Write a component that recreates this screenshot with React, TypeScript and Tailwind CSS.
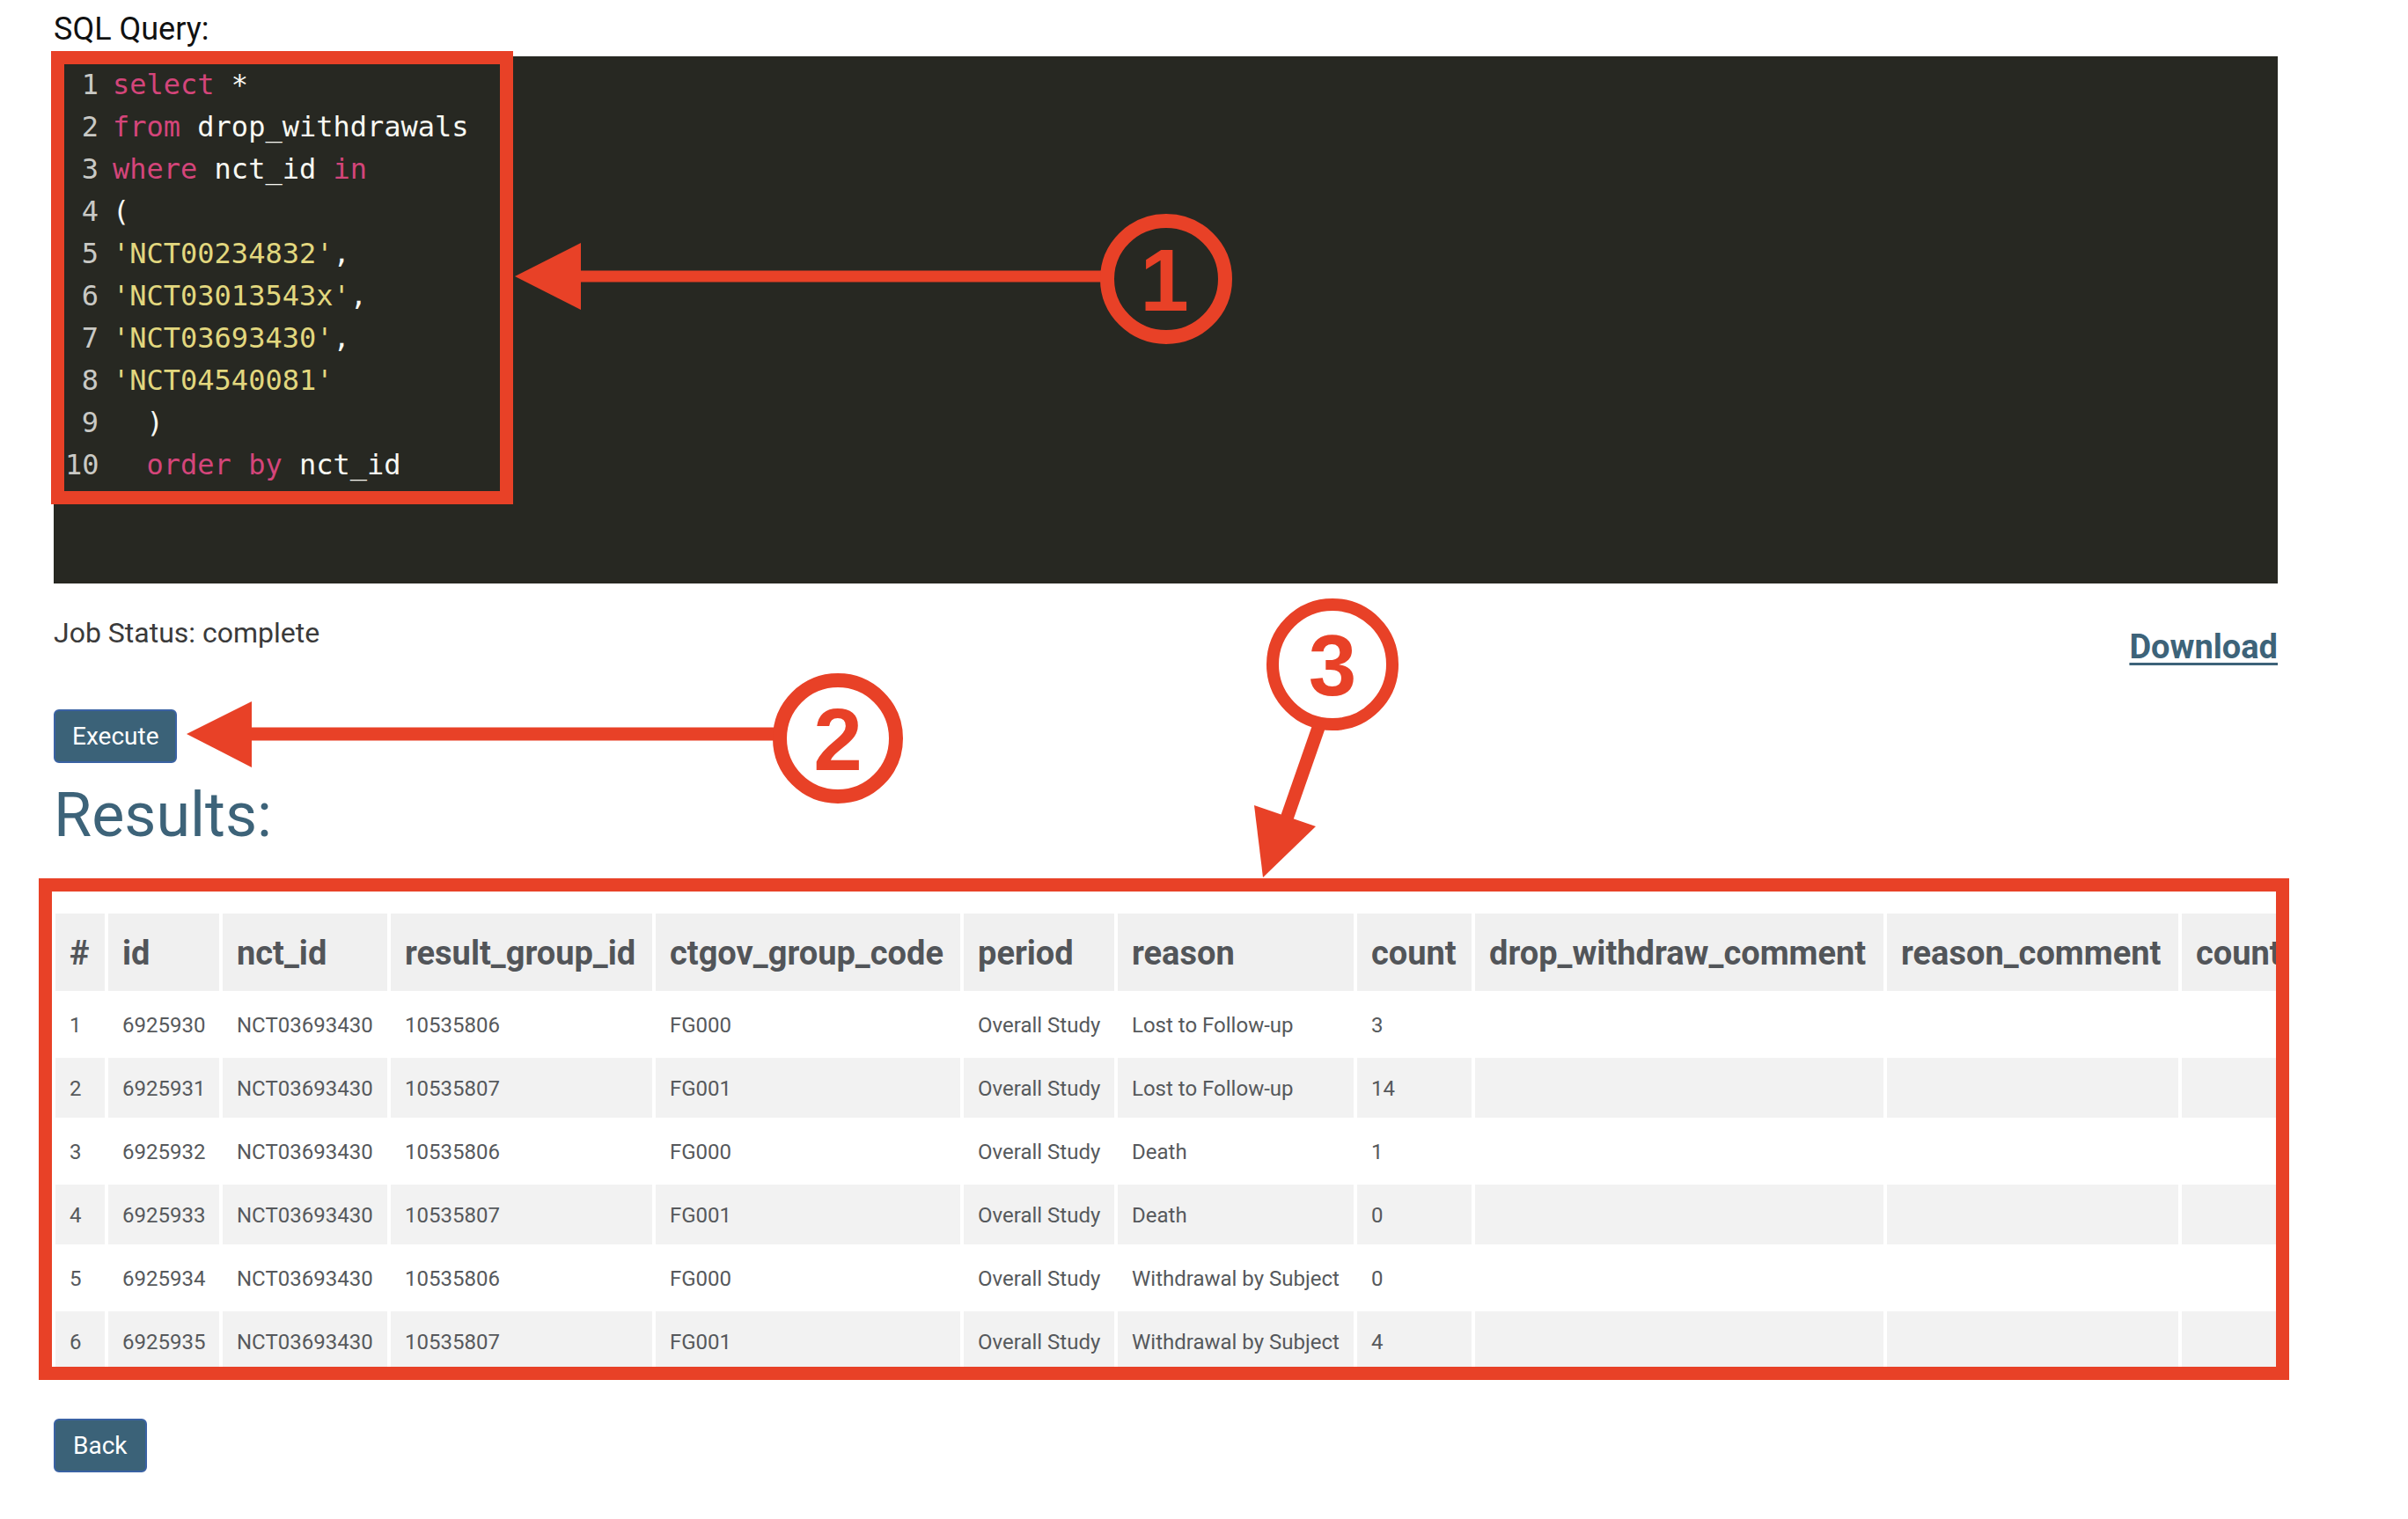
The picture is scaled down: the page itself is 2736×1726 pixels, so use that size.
const RED = '#e84127';

type Tok = { t: string; c?: 'kw' | 'str' };

const codeLines: Tok[][] = [
  [{ t: 'select', c: 'kw' }, { t: ' *' }],
  [{ t: 'from', c: 'kw' }, { t: ' drop_withdrawals' }],
  [{ t: 'where', c: 'kw' }, { t: ' nct_id ' }, { t: 'in', c: 'kw' }],
  [{ t: '(' }],
  [{ t: "'NCT00234832'", c: 'str' }, { t: ',' }],
  [{ t: "'NCT03013543x'", c: 'str' }, { t: ',' }],
  [{ t: "'NCT03693430'", c: 'str' }, { t: ',' }],
  [{ t: "'NCT04540081'", c: 'str' }],
  [{ t: '  )' }],
  [{ t: '  ' }, { t: 'order', c: 'kw' }, { t: ' ' }, { t: 'by', c: 'kw' }, { t: ' nct_id' }],
];

const columns: { name: string; w: string }[] = [
  { name: '#', w: 'w-[56px]' },
  { name: 'id', w: 'w-[126px]' },
  { name: 'nct_id', w: 'w-[187px]' },
  { name: 'result_group_id', w: 'w-[297px]' },
  { name: 'ctgov_group_code', w: 'w-[346px]' },
  { name: 'period', w: 'w-[171px]' },
  { name: 'reason', w: 'w-[268px]' },
  { name: 'count', w: 'w-[130px]' },
  { name: 'drop_withdraw_comment', w: 'w-[464px]' },
  { name: 'reason_comment', w: 'w-[331px]' },
  { name: 'count_units', w: 'w-[300px]' },
];

const rows = [
  ['1', '6925930', 'NCT03693430', '10535806', 'FG000', 'Overall Study', 'Lost to Follow-up', '3'],
  ['2', '6925931', 'NCT03693430', '10535807', 'FG001', 'Overall Study', 'Lost to Follow-up', '14'],
  ['3', '6925932', 'NCT03693430', '10535806', 'FG000', 'Overall Study', 'Death', '1'],
  ['4', '6925933', 'NCT03693430', '10535807', 'FG001', 'Overall Study', 'Death', '0'],
  ['5', '6925934', 'NCT03693430', '10535806', 'FG000', 'Overall Study', 'Withdrawal by Subject', '0'],
  ['6', '6925935', 'NCT03693430', '10535807', 'FG001', 'Overall Study', 'Withdrawal by Subject', '4'],
];

function CodeEditor() {
  return (
    <div className="mt-[9px] h-[599px] bg-[#272822] pt-[8px] pl-[13px] font-['DejaVu_Sans_Mono',monospace] text-[32px] leading-[48px]">
      {codeLines.map((line, i) => (
        <div key={i} className="flex">
          <span className="w-[38px] text-right text-[#c9c9c5]">{i + 1}</span>
          <span className="ml-[16px] whitespace-pre text-[#f8f8f2]">
            {line.map((tok, j) => (
              <span
                key={j}
                className={tok.c === 'kw' ? 'text-[#d4457a]' : tok.c === 'str' ? 'text-[#e2d77e]' : ''}
              >
                {tok.t}
              </span>
            ))}
          </span>
        </div>
      ))}
    </div>
  );
}

function ResultsTable() {
  return (
    <div className="mt-[66px] -ml-[2px] overflow-hidden">
      <table className="w-[2724px] table-fixed border-separate border-spacing-[4px]">
        <thead>
          <tr>
            {columns.map((c, i) => (
              <th
                key={i}
                className={`${c.w} h-[88px] bg-[#f0f0f0] px-[16px] pt-[2px] text-left text-[38px] font-bold text-[#525559] whitespace-nowrap overflow-hidden`}
              >
                {c.name}
              </th>
            ))}
          </tr>
        </thead>
        <tbody>
          {rows.map((r, i) => (
            <tr key={i} className={i % 2 === 1 ? 'bg-[#f2f2f2]' : 'bg-white'}>
              {columns.map((_, j) => (
                <td
                  key={j}
                  className="h-[68px] px-[16px] pt-[2px] text-left align-middle text-[24px] text-[#56595c] whitespace-nowrap overflow-hidden"
                >
                  {r[j] ?? ''}
                </td>
              ))}
            </tr>
          ))}
        </tbody>
      </table>
    </div>
  );
}

// red callouts drawn over the page
function Annotations() {
  const num = "'Liberation Sans', Arial, sans-serif";
  return (
    <svg
      className="pointer-events-none absolute left-0 top-0"
      width="2736"
      height="1726"
      viewBox="0 0 2736 1726"
    >
      <rect x="65.5" y="65.5" width="510" height="500" fill="none" stroke={RED} strokeWidth="15" />
      <rect x="51.5" y="1005.5" width="2542" height="555" fill="none" stroke={RED} strokeWidth="15" />

      {/* 1 */}
      <line x1="655" y1="314" x2="1252" y2="314" stroke={RED} strokeWidth="13" />
      <polygon points="585,314 660,276 660,352" fill={RED} />
      <ellipse cx="1325" cy="317" rx="67" ry="66" fill="none" stroke={RED} strokeWidth="16" />
      <text x="1323" y="318" fill={RED} fontFamily={num} fontWeight="700" fontSize="100" textAnchor="middle" dominantBaseline="central">1</text>

      {/* 2 */}
      <line x1="280" y1="834" x2="882" y2="834" stroke={RED} strokeWidth="15" />
      <polygon points="212,834 286,797 286,872" fill={RED} />
      <ellipse cx="952" cy="839" rx="66" ry="66" fill="none" stroke={RED} strokeWidth="16" />
      <text x="952" y="840" fill={RED} fontFamily={num} fontWeight="700" fontSize="100" textAnchor="middle" dominantBaseline="central">2</text>

      {/* 3 */}
      <line x1="1499" y1="824" x2="1462" y2="930" stroke={RED} strokeWidth="15" />
      <polygon points="1425,915 1495,939 1435,997" fill={RED} />
      <circle cx="1514" cy="755" r="68" fill="none" stroke={RED} strokeWidth="14" />
      <text x="1514" y="756" fill={RED} fontFamily={num} fontWeight="700" fontSize="98" textAnchor="middle" dominantBaseline="central">3</text>
    </svg>
  );
}

export default function App() {
  return (
    <div className="relative min-h-screen w-[2736px] bg-white font-['Roboto',sans-serif]">
      <div className="pl-[61px] pr-[148px] pt-[11px] pb-[40px]">
        <div className="text-[36px] leading-[44px] text-[#111]">SQL Query:</div>

        <CodeEditor />

        <div className="mt-[34px] flex items-start justify-between">
          <div className="text-[32px] leading-[44px] text-[#3a3a3a]">Job Status: complete</div>
          <a
            href="#"
            className="mt-[12px] text-[38px] leading-[52px] font-bold text-[#3d6379] underline decoration-[3px] underline-offset-[5px]"
          >
            Download
          </a>
        </div>

        <div className="mt-[45px]">
          <button className="block h-[61px] rounded-[6px] border-2 border-[#3a62a3] bg-[#3b6278] px-[19px] text-[28px] text-white">
            Execute
          </button>
        </div>

        <h2 className="mt-[17px] text-[70px] leading-[84px] font-normal text-[#3d6379]">Results:</h2>

        <ResultsTable />

        <div className="mt-[50px]">
          <button className="block h-[61px] rounded-[6px] border-2 border-[#3a62a3] bg-[#3b6278] px-[20px] text-[28px] text-white">
            Back
          </button>
        </div>
      </div>

      <Annotations />
    </div>
  );
}
